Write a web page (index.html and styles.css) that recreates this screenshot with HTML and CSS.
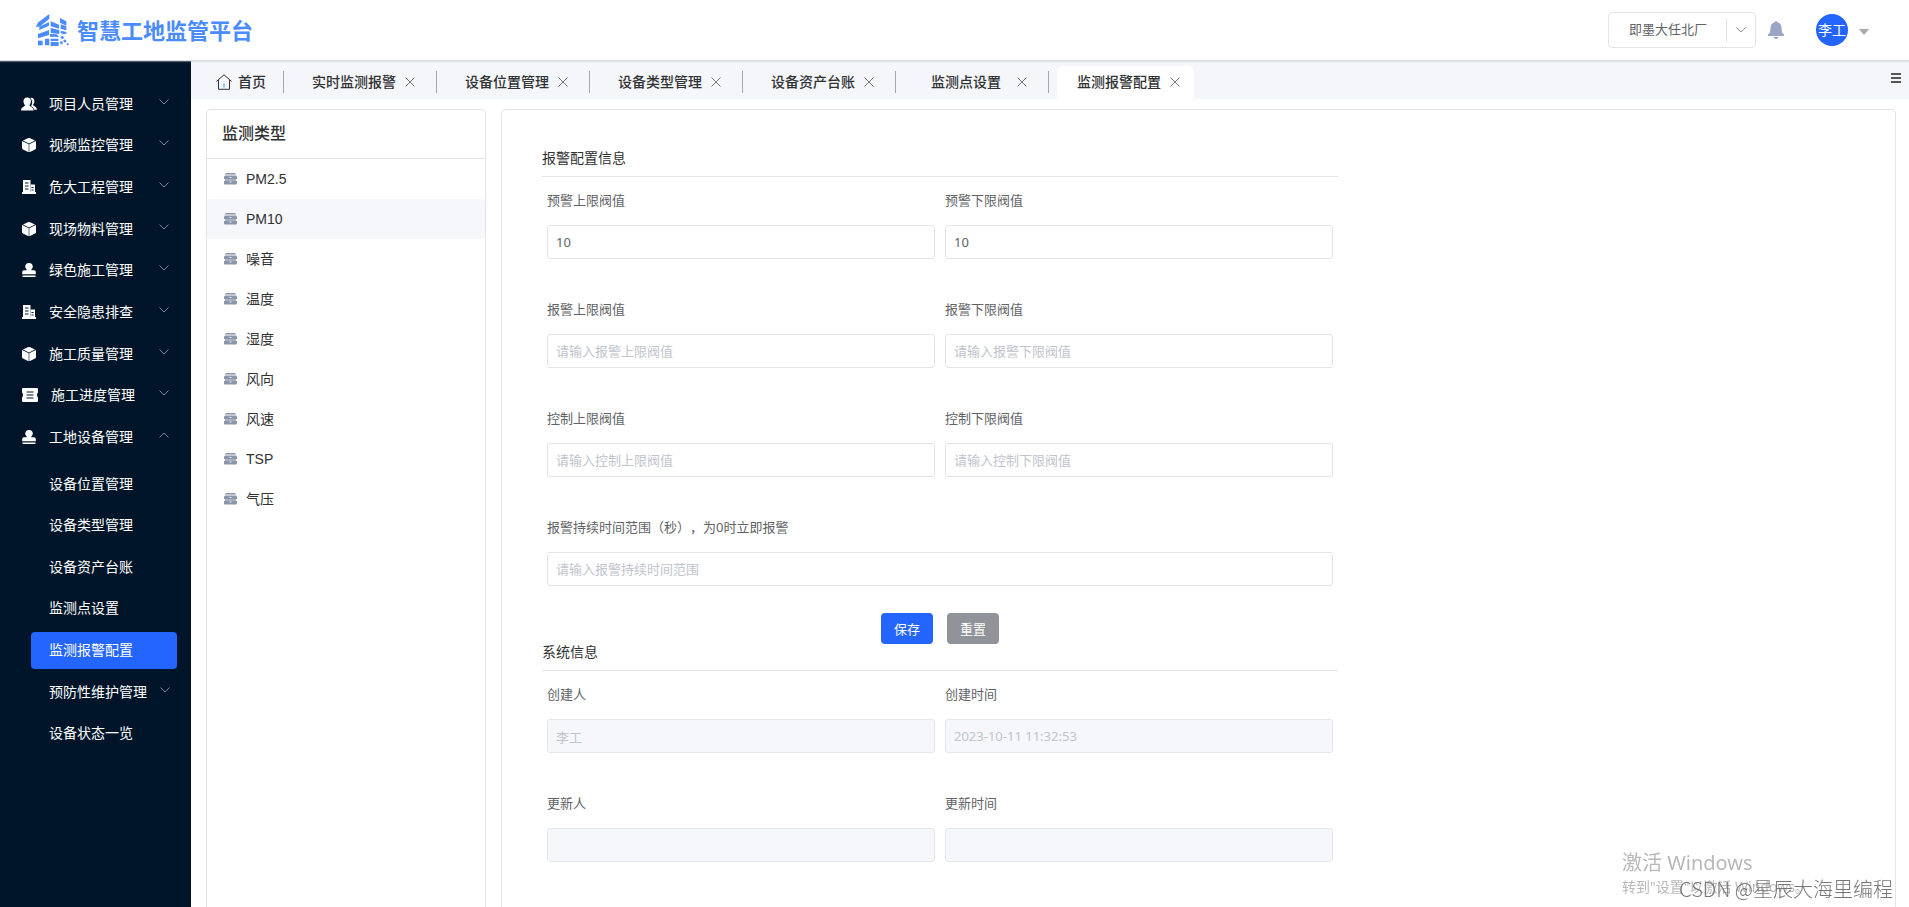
FILE: index.html
```html
<!DOCTYPE html>
<html lang="zh-CN">
<head>
<meta charset="utf-8">
<title>智慧工地监管平台</title>
<link rel="stylesheet" href="styles.css">
</head>
<body>
<svg class="sprite" aria-hidden="true">
  <symbol id="i-users" viewBox="0 0 16 14"><path d="M10 0.8c2.400 0 3.600 1.600 3.400 3.800-.1 1.600-.9 2.600-1.400 3.400 0 1 3.800 1.500 4 4.800h-3c-.3-2-1.600-2.800-3-3.600 1.500-2 1.800-5.800-.8-8.200z"/><path d="M6.200.6c2.600 0 3.900 1.700 3.700 4-.1 1.700-.9 2.800-1.500 3.600 0 1.200 3.900 1.500 4.200 5.200H0c.2-3.700 4-4 4-5.200C3.400 7.400 2.600 6.300 2.500 4.600 2.300 2.300 3.600.6 6.200.6z"/></symbol>
  <symbol id="i-box" viewBox="0 0 14 14"><path d="M7 0q.6 0 1.200.3L13 2.500 7 5.500 1 2.500 5.800.3Q6.400 0 7 0z"/><path d="M.2 3l6.500 3.200V14q-.7 0-1.200-.3L1 11.600q-1-.5-1-1.600V4z"/><path d="M13.800 3L7.300 6.200V14q.7 0 1.200-.3l4.500-2.100q1-.5 1-1.600V4z"/></symbol>
  <symbol id="i-building" viewBox="0 0 14 14"><path fill-rule="evenodd" d="M1 0h7.500v13H1zM3 2.500v1h3.500v-1zm0 3v1h3.500v-1zm0 3v1h3.500v-1z"/><path fill-rule="evenodd" d="M8.500 4.500H13V13H8.500zm1 2.500v1h2V7zm0 2.500v1h2v-1z"/><path d="M0 12h14v2H0z"/></symbol>
  <symbol id="i-stamp" viewBox="0 0 14 14"><path d="M7 0a3.800 3.800 0 0 1 3.800 3.800c0 1.500-1.400 2.200-1.600 3.400H12q1.800 0 1.800 1.800v2.300H.2V9Q.2 7.200 2 7.200h2.800C4.600 6 3.200 5.300 3.200 3.800A3.800 3.800 0 0 1 7 0zM.5 12.600h13V14H.5z"/></symbol>
  <symbol id="i-ticket" viewBox="0 0 16 14"><path fill-rule="evenodd" d="M1 0h14q1 0 1 1v3.500q-1 .8-1 2.500t1 2.500V13q0 1-1 1H1q-1 0-1-1V9.500Q1 8.700 1 7T0 4.500V1q0-1 1-1zm3.500 3.500v1h7v-1zm0 3v1h7v-1zm0 3v1h7v-1z"/></symbol>
  <symbol id="i-drawer" viewBox="0 0 13 12"><path class="drawer-mid" d="M1 1h11v10H1z"/><path class="drawer-body" d="M2.500 0h8q1 0 1.300 1H1.200q.3-1 1.300-1zM1 3h11q1 0 1 1v2H0V4q0-1 1-1zM0 8h13v2.500q0 1-1 1H1q-1 0-1-1z"/><path class="drawer-top" d="M.8 1h11.400v2H.8z"/><path class="drawer-knob" d="M5.500 4h2v1h-2zM5.500 8.500h2v1h-2z"/></symbol>
  <symbol id="i-down" viewBox="0 0 10 6"><path d="M.5.500l4.500 4.500L9.500.500"/></symbol>
  <symbol id="i-up" viewBox="0 0 10 6"><path d="M.5 5.500L5 1l4.500 4.500"/></symbol>
  <symbol id="i-close" viewBox="0 0 10 10"><path d="M.5.500l9 9M9.500.500l-9 9"/></symbol>
</svg>

<header class="header">
  <div class="brand">
    <svg class="logo" viewBox="0 0 102 96" aria-hidden="true">
      <path d="M10 25L43 0v14L14 38H2z"/><path d="M13 38l29-14v11L13 48z"/><path d="M9 60l33-12v15L9 73z"/><path d="M9 80h14v14H9z"/>
      <path d="M47 22l25 10v12l-25-7zM75 12l19 10v13l-19-9zM47 42l26 6v12l-26-3zM77 31l17 6v12l-17-5zM77 50l17 4v5l-8 2-9-4zM45 60l20 1 8 8-28-1zM30 74h13v20H30zM47 74h23v7H47zM47 84h24v12H47zM76 70l6-5 6 6-7 5zM84 80l6-4 5 6-6 4zM94 90l5-3 3 5-5 2zM76 80l7 3v8h-7z"/>
    </svg>
    <h1 class="brand-name">智慧工地监管平台</h1>
  </div>
  <div class="header-tools">
    <div class="site-select">
      <select aria-label="工厂"><option>即墨大任北厂</option></select>
      <span class="site-arrow"><svg class="chevron"><use href="#i-down"/></svg></span>
    </div>
    <button class="bell" aria-label="通知"><svg viewBox="0 0 16 18"><path d="M8 0q1.200 0 1.200 1.200Q13.500 2.200 13.500 7q0 5 2.500 6.500V15H0v-1.500Q2.500 12 2.500 7q0-4.800 4.300-5.800Q6.800 0 8 0zM5.500 16h5Q10 18 8 18t-2.500-2z"/></svg></button>
    <button class="account"><span class="avatar">李工</span><span class="caret"></span></button>
  </div>
</header>

<div class="body">
  <nav class="sidebar">
    <ul class="menu">
      <li><a href="#"><svg class="people"><use href="#i-users"/></svg><span>项目人员管理</span><svg class="chevron"><use href="#i-down"/></svg></a></li>
      <li><a href="#"><svg><use href="#i-box"/></svg><span>视频监控管理</span><svg class="chevron"><use href="#i-down"/></svg></a></li>
      <li><a href="#"><svg><use href="#i-building"/></svg><span>危大工程管理</span><svg class="chevron"><use href="#i-down"/></svg></a></li>
      <li><a href="#"><svg><use href="#i-box"/></svg><span>现场物料管理</span><svg class="chevron"><use href="#i-down"/></svg></a></li>
      <li><a href="#"><svg><use href="#i-stamp"/></svg><span>绿色施工管理</span><svg class="chevron"><use href="#i-down"/></svg></a></li>
      <li><a href="#"><svg><use href="#i-building"/></svg><span>安全隐患排查</span><svg class="chevron"><use href="#i-down"/></svg></a></li>
      <li><a href="#"><svg><use href="#i-box"/></svg><span>施工质量管理</span><svg class="chevron"><use href="#i-down"/></svg></a></li>
      <li><a href="#"><svg class="wide"><use href="#i-ticket"/></svg><span>施工进度管理</span><svg class="chevron"><use href="#i-down"/></svg></a></li>
      <li><a href="#"><svg><use href="#i-stamp"/></svg><span>工地设备管理</span><svg class="chevron"><use href="#i-up"/></svg></a></li>
    </ul>
    <ul class="submenu">
      <li><a href="#">设备位置管理</a></li>
      <li><a href="#">设备类型管理</a></li>
      <li><a href="#">设备资产台账</a></li>
      <li><a href="#">监测点设置</a></li>
      <li><a href="#" class="active">监测报警配置</a></li>
      <li><a href="#">预防性维护管理<svg class="chevron"><use href="#i-down"/></svg></a></li>
      <li><a href="#">设备状态一览</a></li>
    </ul>
  </nav>

  <main class="main">
    <div class="tabs">
      <a class="tab-home" href="#"><svg viewBox="0 0 16 16"><path class="home-line" d="M.5 7.500L8 .8l7.500 6.700M2.500 6v9.300h11V6"/><path class="home-door" d="M8 9.500v4"/></svg>首页</a>
      <div class="tab"><a href="#">实时监测报警</a><button aria-label="关闭"><svg><use href="#i-close"/></svg></button></div>
      <div class="tab"><a href="#">设备位置管理</a><button aria-label="关闭"><svg><use href="#i-close"/></svg></button></div>
      <div class="tab"><a href="#">设备类型管理</a><button aria-label="关闭"><svg><use href="#i-close"/></svg></button></div>
      <div class="tab"><a href="#">设备资产台账</a><button aria-label="关闭"><svg><use href="#i-close"/></svg></button></div>
      <div class="tab"><a href="#">监测点设置</a><button aria-label="关闭"><svg><use href="#i-close"/></svg></button></div>
      <div class="tab current"><a href="#">监测报警配置</a><button aria-label="关闭"><svg><use href="#i-close"/></svg></button></div>
      <button class="tabs-menu" aria-label="标签菜单"><svg viewBox="0 0 10 10"><path d="M0 0h10v2H0zM0 4h10v2H0zM0 8h10v2H0z"/></svg></button>
    </div>

    <div class="content">
      <section class="panel types">
        <h2>监测类型</h2>
        <ul>
          <li><svg><use href="#i-drawer"/></svg>PM2.5</li>
          <li class="selected"><svg><use href="#i-drawer"/></svg>PM10</li>
          <li><svg><use href="#i-drawer"/></svg>噪音</li>
          <li><svg><use href="#i-drawer"/></svg>温度</li>
          <li><svg><use href="#i-drawer"/></svg>湿度</li>
          <li><svg><use href="#i-drawer"/></svg>风向</li>
          <li><svg><use href="#i-drawer"/></svg>风速</li>
          <li><svg><use href="#i-drawer"/></svg>TSP</li>
          <li><svg><use href="#i-drawer"/></svg>气压</li>
        </ul>
      </section>

      <section class="panel config">
        <form class="form">
          <h3>报警配置信息</h3>
          <div class="fields">
            <div class="field"><label for="f1">预警上限阀值</label><input id="f1" type="text" value="10"></div>
            <div class="field"><label for="f2">预警下限阀值</label><input id="f2" type="text" value="10"></div>
            <div class="field"><label for="f3">报警上限阀值</label><input id="f3" type="text" placeholder="请输入报警上限阀值"></div>
            <div class="field"><label for="f4">报警下限阀值</label><input id="f4" type="text" placeholder="请输入报警下限阀值"></div>
            <div class="field"><label for="f5">控制上限阀值</label><input id="f5" type="text" placeholder="请输入控制上限阀值"></div>
            <div class="field"><label for="f6">控制下限阀值</label><input id="f6" type="text" placeholder="请输入控制下限阀值"></div>
            <div class="field full"><label for="f7">报警持续时间范围（秒），为0时立即报警</label><input id="f7" type="text" placeholder="请输入报警持续时间范围"></div>
          </div>
          <div class="actions"><button type="button" class="save">保存</button><button type="button" class="reset">重置</button></div>
          <h3>系统信息</h3>
          <div class="fields">
            <div class="field"><label for="f8">创建人</label><input id="f8" type="text" value="李工" disabled></div>
            <div class="field"><label for="f9">创建时间</label><input id="f9" type="text" value="2023-10-11 11:32:53" disabled></div>
            <div class="field"><label for="f10">更新人</label><input id="f10" type="text" disabled></div>
            <div class="field"><label for="f11">更新时间</label><input id="f11" type="text" disabled></div>
          </div>
        </form>
      </section>
    </div>
  </main>
</div>

<div class="activate"><p class="activate-title">激活 Windows</p><p>转到"设置"以激活 Windows。</p></div>
<div class="credit">CSDN @星辰大海里编程</div>
</body>
</html>
```

FILE: styles.css
```css
* { box-sizing: border-box; margin: 0; padding: 0; }
body {
  display: flex;
  flex-direction: column;
  height: 100vh;
  overflow: hidden;
  background: #fff;
  color: #303133;
  font: 14px/20px "Liberation Sans", "Noto Sans CJK SC", sans-serif;
}
ul { list-style: none; }
a { color: inherit; text-decoration: none; }
button, input, select { font: inherit; border: 0; background: none; }
button { cursor: pointer; }
.sprite { position: absolute; width: 0; height: 0; }
.chevron { width: 10px; height: 6px; fill: none; stroke: #909399; }

.header {
  position: relative;
  z-index: 1;
  flex: none;
  display: flex;
  justify-content: space-between;
  align-items: center;
  height: 61px;
  padding: 0 40px 0 35px;
  background: #fff;
  border-bottom: 1px solid #dcdfe2;
  box-shadow: 0 1px 1px rgba(200, 200, 200, .4);
}
.brand { display: flex; align-items: center; gap: 8px; }
.logo { width: 34px; height: 32px; fill: #4a8cff; }
.brand-name { padding-top: 3px; color: #4a8cff; font-size: 22px; line-height: 32px; font-weight: 700; }
.header-tools { display: flex; align-items: center; }
.site-select {
  position: relative;
  width: 148px;
  height: 36px;
  margin-right: 12px;
  border: 1px solid #e4e4e4;
  border-radius: 4px;
}
.site-select select {
  width: 100%;
  height: 100%;
  padding: 0 40px 0 20px;
  appearance: none;
  color: #606266;
  font-size: 13px;
}
.site-arrow {
  position: absolute;
  top: 5px;
  right: 0;
  display: flex;
  align-items: center;
  justify-content: center;
  width: 29px;
  height: 24px;
  border-left: 1px solid #e4e4e4;
  pointer-events: none;
}
.bell { width: 16px; height: 18px; margin-right: 32px; }
.bell svg { display: block; width: 16px; height: 18px; fill: #9aa6c4; }
.account { display: flex; align-items: center; gap: 11px; }
.avatar {
  width: 32px;
  height: 32px;
  border-radius: 50%;
  background: #2464ff;
  color: #fff;
  line-height: 32px;
  text-align: center;
}
.caret { margin-top: 4px; border: solid transparent; border-width: 6px 5px 0; border-top-color: #aaa; }

.body { flex: 1; display: flex; min-height: 0; }
.sidebar { flex: none; width: 191px; padding-top: 22px; background: #001529; color: #fff; }
.menu { display: grid; grid-auto-rows: 1fr; height: 375px; margin-bottom: 5px; }
.menu a { display: flex; align-items: center; height: 100%; padding: 0 22px; }
.menu svg { width: 14px; height: 14px; margin-right: 13px; fill: #fff; }
.menu .wide { width: 16px; }
.menu .people { width: 16px; margin: 0 12px 0 -1px; }
.menu .chevron, .submenu .chevron { width: 10px; height: 6px; margin: 0 0 4px auto; fill: none; stroke: #7c8794; }
.submenu { display: grid; grid-auto-rows: 1fr; height: 291px; padding: 0 14px 0 31px; }
.submenu li { display: flex; align-items: center; }
.submenu a { flex: 1; display: flex; align-items: center; height: 37px; padding: 0 7px 0 18px; border-radius: 4px; }
.submenu .active { background: #2464ff; }

.main { flex: 1; display: flex; flex-direction: column; min-width: 0; overflow: hidden; }
.tabs { flex: none; display: flex; height: 38px; padding-left: 25px; background: #f4f6fa; font-weight: 500; }
.tab-home { display: flex; align-items: center; gap: 7px; width: 68px; padding-top: 4px; }
.tab-home svg { width: 16px; height: 16px; margin-right: -1px; fill: none; }
.home-line { stroke: #303133; }
.home-door { stroke: #1ba0e2; }
.tab { position: relative; display: flex; align-items: center; width: 153px; padding: 4px 0 0 28px; }
.tab::before {
  content: "";
  position: absolute;
  left: -1px;
  top: 10px;
  width: 1px;
  height: 22px;
  background: #a8a8a8;
}
.tab a { position: relative; width: 84px; text-align: center; }
.tab button { position: relative; width: 10px; height: 10px; margin-left: 9px; }
.tab button svg { display: block; width: 10px; height: 10px; stroke: #777; }
.current::after {
  content: "";
  position: absolute;
  left: 8px;
  right: 8px;
  top: 5px;
  bottom: 0;
  border-radius: 6px 6px 0 0;
  background: #fff;
}
.current a, .current button { z-index: 1; }
.tabs-menu { width: 10px; height: 10px; margin: 12px 8px 0 auto; }
.tabs-menu svg { display: block; width: 10px; height: 10px; fill: #555; }

.content { flex: 1; display: flex; gap: 15px; min-height: 0; padding: 10px 13px 0 15px; }
.panel { border: 1px solid #e4e4e4; border-bottom: 0; border-radius: 5px 5px 0 0; }
.types { flex: none; width: 280px; }
.types h2 { height: 49px; padding-left: 15px; border-bottom: 1px solid #e4e4e4; font-size: 16px; line-height: 47px; font-weight: 500; }
.types li { display: flex; align-items: center; gap: 9px; height: 40px; padding-left: 17px; border-radius: 4px; }
.types svg { width: 13px; height: 12px; }
.drawer-top { fill: #c3c9d2; }
.drawer-body { fill: #8b95aa; }
.drawer-mid { fill: #a9b1bf; }
.drawer-knob { fill: #e8ebf0; }
.types .selected { background: #f5f7fa; }

.config { flex: 1; min-width: 0; padding: 33px 40px 0; }
.form { max-width: 796px; font-family: "Noto Sans", "Noto Sans CJK SC", sans-serif; font-size: 13px; }
.form h3 { height: 34px; border-bottom: 1px solid #e4e4e4; font-size: 14px; line-height: 30px; font-weight: 400; }
.fields { display: grid; grid-template-columns: 1fr 1fr; gap: 35px 10px; padding: 8px 5px 0; }
.full { grid-column: 1 / -1; }
.field label { display: block; height: 40px; line-height: 30px; color: #606266; text-spacing-trim: space-all; }
.field input {
  display: block;
  width: 100%;
  height: 34px;
  padding: 0 8px;
  border: 1px solid #e4e4e4;
  border-radius: 3px;
  color: #606266;
}
.field input::placeholder { color: #c0c4cc; opacity: 1; }
.field input:disabled { background: #f5f7fa; border-color: #e4e7ed; color: #c0c4cc; }
.actions { display: flex; justify-content: center; gap: 14px; padding-top: 27px; margin-bottom: -7px; }
.actions button { width: 52px; height: 31px; border-radius: 4px; color: #fff; }
.save { background: #2464ff; }
.reset { background: #909399; }

.activate {
  position: fixed;
  right: 93px;
  bottom: 10px;
  width: 194px;
  color: #b8b8b8;
  white-space: nowrap;
  font-family: "Noto Sans", "Noto Sans CJK SC", sans-serif;
}
.activate-title { font-size: 20px; line-height: 28px; }
.credit {
  position: fixed;
  right: 16px;
  bottom: 4px;
  color: #777;
  font-family: "Noto Sans CJK SC", sans-serif;
  font-size: 20px;
  line-height: 28px;
  font-weight: 300;
}
```
